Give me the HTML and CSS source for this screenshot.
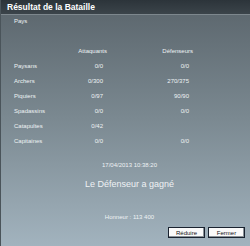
FILE: index.html
```html
<!DOCTYPE html>
<html lang="fr">
<head>
    <meta charset="UTF-8">
    <title>Résultat de la Bataille</title>
    <link rel="stylesheet" href="styles.css">
</head>
<body>
    <div class="battle-window">
        <div class="window-title">Résultat de la Bataille</div>

        <div class="window-body">
            <div class="country">Pays</div>

            <div class="troops">
                <span></span>
                <span class="col-head">Attaquants</span>
                <span class="col-head">Défenseurs</span>

                <span class="unit">Paysans</span><span class="att">0/0</span><span class="def">0/0</span>
                <span class="unit">Archers</span><span class="att">0/300</span><span class="def">270/375</span>
                <span class="unit">Piquiers</span><span class="att">0/97</span><span class="def">90/90</span>
                <span class="unit">Spadassins</span><span class="att">0/0</span><span class="def">0/0</span>
                <span class="unit">Catapultes</span><span class="att">0/42</span><span class="def"></span>
                <span class="unit">Capitaines</span><span class="att">0/0</span><span class="def">0/0</span>
            </div>

            <div class="battle-date">17/04/2013 10:38:20</div>
            <div class="battle-winner">Le Défenseur a gagné</div>
            <div class="battle-honour">Honneur : 113 400</div>

            <div class="actions">
                <button class="win-btn">Réduire</button>
                <button class="win-btn">Fermer</button>
            </div>
        </div>
    </div>
</body>
</html>
```

FILE: styles.css
```css
* {
    margin: 0;
    padding: 0;
    box-sizing: border-box;
}

body {
    width: 250px;
    height: 246px;
    overflow: hidden;
    font-family: 'Liberation Sans', Arial, sans-serif;
    color: #eef2f4;
    background: #5f6a71;
}

.battle-window {
    height: 246px;
    display: flex;
    flex-direction: column;
    border-left: 1px solid #4a545a;
}

.window-title {
    height: 15px;
    padding: 2px 0 0 6px;
    font-size: 8.5px;
    font-weight: 700;
    color: #fff;
    background: linear-gradient(180deg, #2c343a 0%, #3b444a 100%);
    border-bottom: 1px solid #7d878d;
}

.window-body {
    flex: 1;
    display: flex;
    flex-direction: column;
    padding: 3px 5px 8px 13px;
    font-size: 6px;
    background: linear-gradient(180deg, #5e6970 0%, #7b8991 45%, #a2b3be 100%);
}

.country {
    height: 30px;
}

.troops {
    display: grid;
    grid-template-columns: 67px 22px 86px;
    grid-auto-rows: 15px;
    align-items: start;
}

.col-head {
    justify-self: end;
    margin-right: -4px;
}

.att, .def {
    text-align: right;
}

.battle-date {
    margin-top: 9px;
    text-align: center;
}

.battle-winner {
    margin-top: 11px;
    font-size: 9px;
    text-align: center;
}

.battle-honour {
    margin-top: 25px;
    text-align: center;
}

.actions {
    margin-top: auto;
    display: flex;
    justify-content: flex-end;
    gap: 3px;
}

.win-btn {
    width: 37px;
    height: 11px;
    font-family: 'Liberation Sans', Arial, sans-serif;
    font-size: 6px;
    color: #111;
    background: #fafafa;
    border: 1px solid #1a2330;
    box-shadow: inset -1px -1px 0 #8a9298;
}
```
